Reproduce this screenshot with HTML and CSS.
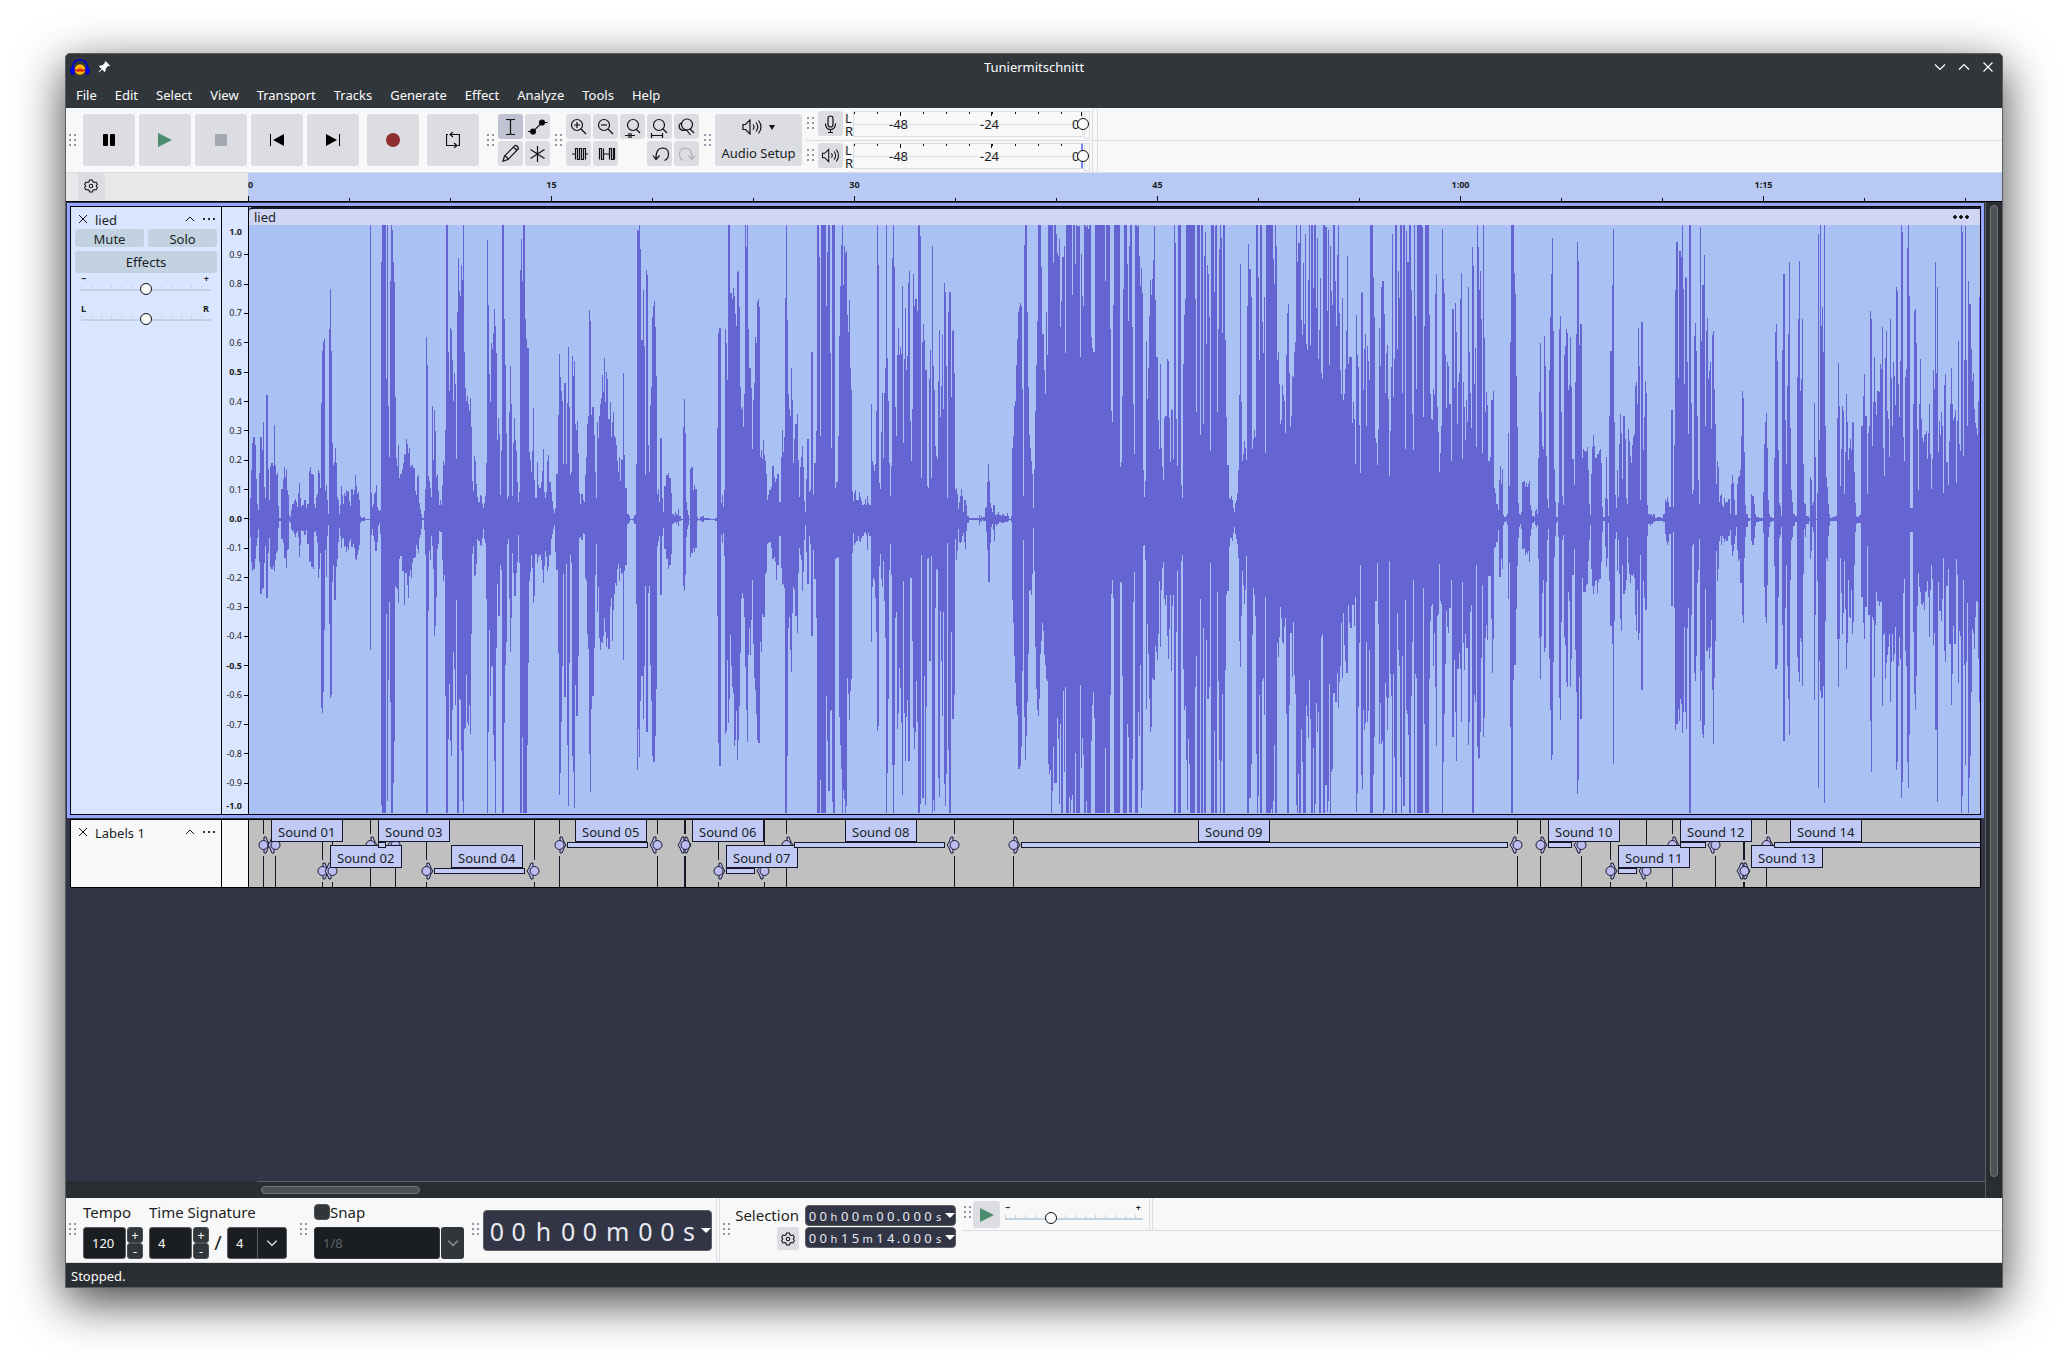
FILE: index.html
```html
<!DOCTYPE html>
<html lang="en">
<head>
<meta charset="utf-8">
<title>Tuniermitschnitt</title>
<link rel="stylesheet" href="styles.css">
</head>
<body>
<svg class="defs" aria-hidden="true">
  <symbol id="gear" viewBox="0 0 16 16"><path d="M6.3 1.2h3.4l.6 2 1.4.8 2-.5 1.6 2.8-1.4 1.7 1.4 1.7-1.6 2.8-2-.5-1.4.8-.6 2H6.3l-.6-2-1.4-.8-2 .5L.7 9.7 2.100 8 .7 6.300l1.600-2.800 2 .5 1.400-.8z"/><circle cx="8" cy="8" r="2"/></symbol>
  <symbol id="glass" viewBox="0 0 25 25"><circle cx="11" cy="11" r="5.500"/><path d="M15 15l5 5"/></symbol>
  <symbol id="speaker" viewBox="0 0 20 16"><path d="M1 5.500v5h2.500L8 15V1L3.500 5.500zM11 5.500q2 2.500 0 5M14 3.500q3.500 4.500 0 9M16.500 1.500q5 6.500 0 13"/></symbol>
  <symbol id="cross" viewBox="0 0 10 10"><path d="M1 1l8 8M9 1l-8 8"/></symbol>
  <symbol id="up" viewBox="0 0 10 10"><path d="M1 7l4-4 4 4"/></symbol>
  <symbol id="down" viewBox="0 0 10 6"><path d="M1 1l4 4 4-4"/></symbol>
</svg>
<main class="window">
  <header class="titlebar">
    <svg class="logo" viewBox="0 0 20 18"><path d="M2.500 10C2 -1 18 -1 17.500 10" fill="none" stroke="#0000d8" stroke-width="1.600"/><circle cx="10" cy="11.500" r="5.300" fill="#f7b500"/><path d="M5 12l1.500-1 1.500.5 2-1.500 2 1.500 1.500-.5 1.500 1v1.500l-1.500-.5-1.500 1-2-1-2 1-1.500-1-1.500.5z" fill="#e3260c"/><path d="M4.500 8.500v8C1 17.500 0 14 .2 12S2 8 4.500 8.500zM15.500 8.500v8c3.500 1 4.500-2.500 4.300-4.500s-1.800-4-4.300-3.500z" fill="#0000e6"/></svg>
    <svg class="pin" viewBox="0 0 12 12"><path d="M7.500 0L12 4.500l-1 .7-.8-.2L7.800 7.400 7.500 10 6.500 11 4.200 8.500 1 11.500l-.5-.5 3-3.200L1 5.500l1-1 2.600-.3L7 1.800 6.800 1z" fill="#fff"/></svg>
    <h1>Tuniermitschnitt</h1>
    <div class="window-buttons">
      <button aria-label="Minimize"><svg viewBox="0 0 10 10"><path d="M0 2.500l5 5 5-5"/></svg></button>
      <button aria-label="Maximize"><svg viewBox="0 0 10 10"><path d="M0 7.500l5-5 5 5"/></svg></button>
      <button aria-label="Close"><svg viewBox="0 0 10 10"><path d="M.5.5l9 9M9.500.5l-9 9"/></svg></button>
    </div>
  </header>
  <nav class="menubar">
    <button>File</button><button>Edit</button><button>Select</button><button>View</button><button>Transport</button><button>Tracks</button><button>Generate</button><button>Effect</button><button>Analyze</button><button>Tools</button><button>Help</button>
  </nav>

  <section class="toolbar">
    <i class="grip first"></i>
    <div class="transport">
      <button aria-label="Pause"><svg viewBox="0 0 14 14"><rect x="1" y="1" width="5" height="12" rx="1"/><rect x="8" y="1" width="5" height="12" rx="1"/></svg></button>
      <button aria-label="Play"><svg viewBox="0 0 14 14" class="green"><path d="M0 0v14l14-7z"/></svg></button>
      <button aria-label="Stop"><svg viewBox="0 0 14 14" class="grey"><path d="M1 1h12v12H1z"/></svg></button>
      <button aria-label="Skip to start"><svg viewBox="0 0 14 14"><path d="M0 1h1v12H0zM14 1v12L3 7z"/></svg></button>
      <button aria-label="Skip to end"><svg viewBox="0 0 14 14"><path d="M13 1h1v12h-1zM0 1v12l11-6z"/></svg></button>
      <button aria-label="Record" class="apart"><svg viewBox="0 0 14 14" class="red"><circle cx="7" cy="7" r="7"/></svg></button>
      <button aria-label="Loop" class="apart"><svg viewBox="0 0 14 16" class="line loop"><path d="M4 2.500h9.500v11H12M10 13.500H.5v-11H2M7 0L4 2.500 7 5M8 11l3 2.500L8 16"/></svg></button>
    </div>
    <i class="grip wide"></i>
    <div class="tools two">
      <button class="on" aria-label="Selection tool"><svg viewBox="0 0 25 25" class="line"><path d="M8 5.500h3.500l1 1 1-1H17M8 20.500h3.500l1-1 1 1H17M12.500 6v14"/></svg></button>
      <button aria-label="Envelope tool"><svg viewBox="0 0 25 25" class="line"><path d="M3 17.500h5L17 8.500h5.500"/><circle cx="8" cy="17.500" r="2.500" class="dot"/><circle cx="17" cy="8.500" r="2.500" class="dot"/></svg></button>
      <button aria-label="Draw tool"><svg viewBox="0 0 25 25" class="line"><path d="M5 20l1.500-5L17 4.500q2.500-.5 3.500 3L10 18.500zM6.500 15q3 .5 3.500 3.500M15 6.500q3 .5 3.500 3.500"/></svg></button>
      <button aria-label="Multi-tool"><svg viewBox="0 0 25 25" class="line"><path d="M12.500 5v16M5.500 8.500l14 9M19.500 8.500l-14 9"/></svg></button>
    </div>
    <i class="grip"></i>
    <div class="tools five">
      <button aria-label="Zoom in"><svg viewBox="0 0 25 25" class="line"><use href="#glass"/><path d="M8 11h6M11 8v6"/></svg></button>
      <button aria-label="Zoom out"><svg viewBox="0 0 25 25" class="line"><use href="#glass"/><path d="M8 11h6"/></svg></button>
      <button aria-label="Fit selection"><svg viewBox="0 0 25 25" class="line"><circle cx="13" cy="11" r="5.500"/><path d="M16 15l4 4M5 21.500h10M9 19v5M11 19v5"/></svg></button>
      <button aria-label="Fit project"><svg viewBox="0 0 25 25" class="line"><circle cx="12" cy="11" r="5.500"/><path d="M16 15l4 4M4.500 21.500h11M4.500 19v5M15.500 19v5"/></svg></button>
      <button aria-label="Zoom toggle"><svg viewBox="0 0 25 25" class="line"><circle cx="13" cy="10.500" r="5.500"/><path d="M16 15l4 4M8 8.500q-4 2-2.500 5.500t7 2l4 5"/></svg></button>
      <button aria-label="Trim"><svg viewBox="0 0 25 25" class="line"><path d="M6 13h4M9.500 18.500v-11h2v11h2v-11h2v11h2v-11h2V18.500M19 13h3"/></svg></button>
      <button aria-label="Silence"><svg viewBox="0 0 25 25" class="line"><path d="M6.500 18.500v-11h2v11h2v-11M10.500 13h6M16.500 18.500v-11h2v11h2v-11h1v11"/></svg></button>
      <button class="undo" aria-label="Undo"><svg viewBox="0 0 25 25" class="line"><path d="M9 18q-.5-11 7-11 5.500.5 5.500 6 0 5-4 6.500M6 14.500l3 4 3.500-4"/></svg></button>
      <button aria-label="Redo" disabled><svg viewBox="0 0 25 25" class="line"><path d="M18 18q.5-11-7-11-5.500.5-5.500 6 0 5 4 6.500M21 14.500l-3 4-3.500-4"/></svg></button>
    </div>
    <i class="grip"></i>
    <button class="audio"><span><svg class="line" viewBox="0 0 20 16"><use href="#speaker"/></svg><b class="caret"></b></span>Audio Setup</button>
    <div class="meters">
      <div class="meter-row">
        <i class="grip"></i>
        <button aria-label="Record meter"><svg viewBox="0 0 25 25" class="line"><rect x="10" y="5" width="5" height="11" rx="2.500"/><path d="M7.500 12.500q0 6 5 6t5-6M12.500 18.500v3M10 21.500h5"/></svg></button>
        <div class="lr"><span>L</span><span>R</span></div>
        <div class="meter"><div class="bars"></div><span class="m48">-48</span><span class="m24">-24</span><span class="m0">0</span><input type="range" value="100" aria-label="Recording level"></div>
      </div>
      <div class="meter-row">
        <i class="grip"></i>
        <button aria-label="Playback meter"><svg viewBox="-4 -5 28 26" class="line"><use href="#speaker" width="20" height="16"/></svg></button>
        <div class="lr"><span>L</span><span>R</span></div>
        <div class="meter play"><div class="bars"></div><span class="m48">-48</span><span class="m24">-24</span><span class="m0">0</span><input type="range" value="100" aria-label="Playback level"></div>
      </div>
    </div>
  </section>

  <section class="timeline">
    <div class="timeline-left"><button aria-label="Timeline options"><svg class="line" viewBox="0 0 16 16"><use href="#gear"/></svg></button></div>
    <div class="scale"><span>0</span><span>15</span><span>30</span><span>45</span><span>1:00</span><span>1:15</span></div>
  </section>

  <section class="workspace">
    <div class="tracks">
      <article class="track selected">
        <div class="panel">
          <div class="track-title"><button aria-label="Close track"><svg class="line" viewBox="0 0 10 10"><use href="#cross"/></svg></button><span>lied</span><button aria-label="Collapse"><svg class="line" viewBox="0 0 10 10"><use href="#up"/></svg></button><button class="more" aria-label="Track menu"></button></div>
          <div class="mute-solo"><button>Mute</button><button>Solo</button></div>
          <button class="effects">Effects</button>
          <div class="slider"><div class="ends"><span>−</span><span>+</span></div><input type="range" aria-label="Gain"></div>
          <div class="slider"><div class="ends"><span>L</span><span>R</span></div><input type="range" aria-label="Pan"></div>
        </div>
        <div class="ruler"><b>1.0</b><span>0.9</span><span>0.8</span><span>0.7</span><span>0.6</span><b>0.5</b><span>0.4</span><span>0.3</span><span>0.2</span><span>0.1</span><b>0.0</b><span>-0.1</span><span>-0.2</span><span>-0.3</span><span>-0.4</span><b>-0.5</b><span>-0.6</span><span>-0.7</span><span>-0.8</span><span>-0.9</span><b>-1.0</b></div>
        <div class="clip">
          <div class="clip-head"><span>lied</span><button class="more" aria-label="Clip menu"></button></div>
          <svg class="wave" viewBox="0 0 1731 588" preserveAspectRatio="none"><path id="wave"/></svg>
        </div>
      </article>
      <article class="track labels">
        <div class="panel"><div class="track-title"><button aria-label="Close track"><svg class="line" viewBox="0 0 10 10"><use href="#cross"/></svg></button><span>Labels 1</span><button aria-label="Collapse"><svg class="line" viewBox="0 0 10 10"><use href="#up"/></svg></button><button class="more" aria-label="Track menu"></button></div></div>
        <div class="gutter"></div>
        <svg class="label-lane" id="labels"></svg>
      </article>
    </div>
    <div class="vscroll"><i></i></div>
    <div class="hscroll"><i></i></div>
  </section>

  <section class="bottombar">
    <i class="grip first"></i>
    <div class="field">
      <label for="tempo">Tempo</label>
      <div class="controls"><input id="tempo" value="120"><div class="spin"><button>+</button><button>-</button></div></div>
    </div>
    <div class="field">
      <label for="beats">Time Signature</label>
      <div class="controls"><input id="beats" value="4"><div class="spin"><button>+</button><button>-</button></div><span class="slash">/</span><div class="combo"><select aria-label="Beat unit"><option>4</option></select><svg viewBox="0 0 10 6"><use href="#down"/></svg></div></div>
    </div>
    <i class="grip snapgrip"></i>
    <div class="field">
      <label class="snap"><input type="checkbox">Snap</label>
      <div class="controls"><div class="combo snapto"><select aria-label="Snap to" disabled><option>1/8</option></select><span class="arrow"><svg viewBox="0 0 10 6"><use href="#down"/></svg></span></div></div>
    </div>
    <i class="grip timegrip"></i>
    <div class="time big"><span>0</span><span>0</span><span class="h">h</span><span>0</span><span>0</span><span class="m">m</span><span>0</span><span>0</span><span class="s">s</span><button class="caret" aria-label="Time format"></button></div>
    <i class="split"></i>
    <i class="grip selgrip"></i>
    <div class="selection"><span>Selection</span><button aria-label="Selection options"><svg class="line" viewBox="0 0 16 16"><use href="#gear"/></svg></button></div>
    <div class="times">
      <div class="time"><span>0</span><span>0</span><span class="h">h</span><span>0</span><span>0</span><span class="m">m</span><span>0</span><span>0</span><span class="p">.</span><span>0</span><span>0</span><span>0</span><span class="s">s</span><button class="caret" aria-label="Time format"></button></div>
      <div class="time"><span>0</span><span>0</span><span class="h">h</span><span>1</span><span>5</span><span class="m">m</span><span>1</span><span>4</span><span class="p">.</span><span>0</span><span>0</span><span>0</span><span class="s">s</span><button class="caret" aria-label="Time format"></button></div>
    </div>
    <div class="speed">
      <i class="grip"></i>
      <button aria-label="Play at speed"><svg viewBox="0 0 14 14" class="green"><path d="M0 0v14l14-7z"/></svg></button>
      <div class="slider"><div class="ends"><span>−</span><span>+</span></div><input type="range" value="32" aria-label="Playback speed"></div>
      <i class="split"></i>
    </div>
  </section>
  <footer class="status">Stopped.</footer>
</main>
<script src="tracks.js"></script>
</body>
</html>
```
FILE: styles.css
```css
* { box-sizing: border-box; }
body {
  margin: 0;
  min-height: 100vh;
  padding: 53px 65px 77px;
  display: flex;
  background: #fff;
  color: #1b1e24;
  font: 13px/18px "Noto Sans", sans-serif;
}
.defs { position: absolute; width: 0; height: 0; }
button { font: inherit; color: inherit; border: 0; padding: 0; margin: 0; background: none; display: flex; align-items: center; justify-content: center; }
input, select { font: inherit; margin: 0; min-width: 0; }
svg { display: block; }
svg.line, .line { fill: none; stroke: #111; stroke-width: 1.2; }
.dot { fill: #000; }
.green { fill: #4b8b6e; }
.grey { fill: #a4a8b2; }
.red { fill: #8f2e30; }

.window {
  flex: 1;
  min-width: 0;
  display: flex;
  flex-direction: column;
  border: 1px solid #5a5e62;
  border-radius: 5px 5px 0 0;
  background: #2a2d31;
  box-shadow: 0 14px 48px rgba(0, 0, 0, .75);
}
.titlebar { height: 27px; display: flex; align-items: center; background: #31363b; color: #fcfcfc; border-radius: 4px 4px 0 0; padding: 0 9px 1px 4px; }
.titlebar h1 { flex: 1; margin: 0; font-size: 13px; font-weight: 400; text-align: center; padding-left: 23px; }
.logo { width: 20px; height: 18px; }
.pin { width: 12px; height: 12px; margin-left: 8px; }
.window-buttons { display: flex; gap: 14px; }
.window-buttons svg { width: 10px; height: 10px; fill: none; stroke: #fff; stroke-width: 1.2; overflow: visible; }
.menubar { height: 27px; display: flex; gap: 18px; padding-left: 10px; background: #31363b; color: #fcfcfc; }

.toolbar { height: 65px; display: flex; background: #f8f8f8; border-bottom: 1px solid #dcdde3; }
.grip {
  flex: none;
  align-self: center;
  width: 7px;
  height: 12px;
  margin: 0 4px 0 5px;
  background: conic-gradient(from 270deg at 2px 2px, #9496a8 90deg, transparent 0) 0 0 / 5px 5px;
}
.grip.first { margin: 0 7px 0 3px; }
.grip.wide { margin-left: 8px; }
.transport { display: flex; gap: 4px; align-self: center; margin-bottom: 1px; }
.transport button { width: 52px; height: 52px; border-radius: 3px; background: #dcdde3; }
.transport svg { width: 14px; height: 14px; }
.transport .loop { height: 16px; }
.transport .apart { margin-left: 4px; }
.tools { display: grid; gap: 2px; align-content: start; padding-top: 6px; }
.tools.two { grid-template-columns: 25px 25px; }
.tools.five { grid-template-columns: repeat(5, 25px); }
.tools button { height: 25px; border-radius: 3px; background: #dcdde3; }
.tools svg { width: 25px; height: 25px; }
.tools .on { background: #c0c2d2; }
.tools .undo { grid-column: 4; }
.tools button:disabled { opacity: 1; }
.tools button:disabled svg { stroke: #b0b2b8; }
.audio { width: 87px; height: 52px; margin-top: 6px; flex-direction: column; justify-content: space-between; padding: 3px 0 4px; border-radius: 3px; background: #dcdde3; }
.audio span { display: flex; align-items: center; gap: 7px; height: 20px; }
.audio svg { width: 20px; height: 16px; }
.caret { border: 3px solid transparent; border-top: 5px solid #111; border-bottom: 0; }
.meters { flex: 1; margin-left: 3px; }
.meter-row { height: 32px; display: flex; padding-top: 3px; }
.meter-row::after { content: ""; width: 4px; margin: -3px 0 0 3px; border: 1px solid #dcdde3; border-width: 0 1px; }
.meter-row + .meter-row { border-top: 1px solid #dcdde3; padding-top: 2px; }
.meter-row .grip { margin: 6px 4px 0 2px; align-self: flex-start; }
.meter-row button { width: 25px; height: 25px; border-radius: 3px; background: #dcdde3; }
.meter-row svg { width: 25px; height: 25px; }
.lr { width: 10px; padding: 1px 0 0 2px; display: flex; flex-direction: column; font-size: 13px; line-height: 13px; }
.meter { position: relative; width: 236px; height: 26px; }
.meter .bars {
  height: 26px;
  width: 230px;
  border: 1px solid #dcdde3;
  background:
    linear-gradient(#111, #111) 46px 0 / 1px 4px no-repeat,
    linear-gradient(#111, #111) 137px 0 / 1px 4px no-repeat,
    linear-gradient(#111, #111) 227px 0 / 1px 4px no-repeat,
    linear-gradient(90deg, transparent 22px, #111 0) 1px 0 / 23px 2px repeat-x,
    linear-gradient(#dcdde3, #dcdde3) 0 12px / 100% 1px no-repeat;
}
.meter::after { content: ""; position: absolute; left: 231px; top: 0; width: 4px; height: 26px; border: 1px solid #dcdde3; }
.meter.play .bars { border-right: 2px solid #6f86ec; }
.meter span { position: absolute; top: 4px; }
.m48 { left: 36px; }
.m24 { left: 127px; }
.m0 { left: 219px; }
.meter input { position: absolute; z-index: 1; left: 0; top: 6px; width: 236px; height: 14px; background: none; }
.meter input::-webkit-slider-thumb { width: 13px; height: 13px; }

input[type=range] { appearance: none; }
input[type=range]::-webkit-slider-thumb { appearance: none; width: 12px; height: 12px; border: 1px solid #111; border-radius: 50%; background: #fafafa; }

.timeline { height: 29px; display: flex; border-bottom: 1px solid #000; background: #b8caf3; }
.timeline-left { width: 182px; padding-left: 12px; background: #e8e8ea; }
.timeline-left button { width: 27px; height: 27px; padding: 0 1px 1px 0; border-radius: 3px; background: #dcdde3; }
.timeline-left svg { width: 14px; height: 14px; }
.scale {
  flex: 1;
  min-width: 0;
  overflow: hidden;
  display: flex;
  font-size: 9px;
  font-weight: 700;
  line-height: 24px;
  background:
    linear-gradient(90deg, transparent 302px, #111 0) 1px 100% / 303px 5px repeat-x,
    linear-gradient(90deg, transparent 100px, #111 0) 1px 100% / 101px 3px repeat-x;
}
.scale span { flex: none; width: 303px; text-align: center; }
.scale span:first-child { width: 152px; text-align: left; }

.workspace { flex: 1; display: grid; grid-template-columns: minmax(0, 1fr) 17px; grid-template-rows: 1fr 17px; }
.tracks { background: #313546; }
.vscroll { grid-row: 1 / 3; grid-column: 2; border-left: 1px solid #5a5e68; padding: 3px 4px 21px; }
.vscroll i { display: block; height: 100%; width: 8px; border: 1px solid #75787b; border-radius: 4px; background: #4e5255; }
.hscroll { grid-row: 2; margin-left: 191px; border-top: 1px solid #5a5c68; padding: 4px; }
.hscroll i { display: block; width: 159px; height: 8px; border: 1px solid #75787b; border-radius: 4px; background: #4e5255; }
.track { display: grid; grid-template-columns: 151px 27px minmax(0, 1fr); margin: 4px 4px 0; border: 1px solid #000; background: #f8f8f8; }
.track.selected { outline: 3px solid #96a5ff; background: #dae6ff; }
.track.labels { height: 69px; }
.panel { padding: 0 4px; border-right: 1px solid #000; }
.track-title { height: 22px; padding: 2px 2px 0 3px; display: flex; align-items: center; }
.track-title span { flex: 1; padding: 2px 0 0 7px; }
.track-title button:first-child svg { width: 10px; height: 10px; stroke-width: 1; }
.track-title button:nth-child(3) svg { width: 10px; height: 10px; stroke-width: 1; margin-right: 7px; }
.more { width: 13px; height: 10px; background: radial-gradient(circle at 2px 5px, #333 1px, transparent 1.500px) 0 0 / 5px 10px; }
.mute-solo { display: grid; grid-template-columns: 1fr 1fr; gap: 4px; }
.mute-solo button { height: 18px; padding-top: 2px; border-radius: 3px; background: #c3d2e0; }
.effects { width: 100%; height: 22px; margin-top: 4px; border-radius: 3px; background: #c3d2e0; }
.slider { margin: 2px 6px 9px 6px; }
.slider .ends { display: flex; justify-content: space-between; height: 7px; font-size: 9px; font-weight: 700; line-height: 8px; padding: 0 2px 0 0; }
.slider input {
  display: block;
  width: 100%;
  height: 14px;
  background:
    linear-gradient(#c3d2e0, #c3d2e0) 0 7px / 100% 2px no-repeat,
    linear-gradient(90deg, #c3d2e0 1px, transparent 0) 0 4px / 10px 3px repeat-x;
}
.ruler { display: grid; grid-template-rows: 33px repeat(19, 1fr) 16px; height: 607px; border-right: 1px solid #000; font-size: 9px; line-height: 16px; text-align: right; }
.ruler > * { display: flex; align-items: center; justify-content: flex-end; gap: 2px; }
.ruler > *::after { content: ""; width: 4px; height: 1px; background: #000; }
.ruler > b:first-child { align-items: flex-end; padding-right: 6px; }
.ruler > b:last-child { padding-right: 6px; }
.ruler > b:first-child::after, .ruler > b:last-child::after { display: none; }
.clip { display: flex; flex-direction: column; background: #aac1f3; }
.clip-head { height: 18px; display: flex; justify-content: space-between; align-items: center; border-top: 2px solid #16182a; border-radius: 4px 0 0 0; background: #cfd5f3; padding: 0 10px 0 5px; }
.clip-head .more { width: 17px; background: radial-gradient(circle at 2px 5px, #111 1.500px, transparent 2px) 0 0 / 6px 10px; }
.wave { width: 100%; height: 588px; fill: #6464d2; shape-rendering: crispEdges; }
.gutter { border-right: 1px solid #000; }
.label-lane { width: 100%; height: 67px; background: #c0c0c0; }
.label-lane text { fill: #1b1e24; }
.label-lane .box { fill: #c0caf5; stroke: #16182a; }
.label-lane .bar { fill: #c0caf5; stroke: #16182a; }
.label-lane .stem { stroke: #16182a; }
.label-lane .knob { fill: #bcbcf0; stroke: #16182a; }

.bottombar { height: 65px; display: flex; background: #f8f8f8; border-bottom: 1px solid #dcdde3; font-size: 15px; }
.bottombar > .grip { margin-bottom: 2px; }
.field { padding-top: 5px; margin-right: 6px; white-space: nowrap; }
.field label { display: block; height: 18px; margin-bottom: 6px; }
.controls { display: flex; height: 32px; color: #fcfcfc; font-size: 13px; }
.controls input { width: 43px; margin-right: 1px; padding: 0 8px; color: #fcfcfc; background: #1b1e20; border: 1px solid #5b5f63; border-radius: 3px; }
.spin { width: 16px; display: flex; flex-direction: column; }
.spin button { flex: 1; border: 1px solid #4d5156; border-radius: 3px; background: #31363b; line-height: 12px; }
.slash { width: 18px; color: #1b1e24; font-size: 20px; line-height: 32px; text-align: center; }
.combo { position: relative; width: 60px; display: flex; }
.combo select { appearance: none; width: 60px; padding: 0 8px; color: #fcfcfc; border: 1px solid #5b5f63; border-radius: 3px; background: linear-gradient(#5b5f63, #5b5f63) 29px 0 / 1px 100% no-repeat #1b1e20; }
.combo > svg { position: absolute; right: 9px; top: 12px; width: 12px; height: 8px; }
.combo svg { fill: none; stroke: #fcfcfc; stroke-width: 1; }
.combo.snapto { width: 150px; }
.snapto select { width: 126px; color: #5f6366; opacity: 1; background: #1b1e20; border-color: #33383c; }
.snapto .arrow { width: 23px; margin-left: 1px; display: flex; align-items: center; justify-content: center; border-radius: 3px; background: #31363b; }
.snapto .arrow svg { width: 12px; height: 8px; stroke: #7c8084; stroke-width: 1.500; }
.snapgrip { margin: 0 7px; }
.field label.snap { display: flex; align-items: center; }
.snap input { appearance: none; width: 16px; height: 16px; border: 1px solid #4d5156; border-radius: 4px; background: #31363b; }
.timegrip { margin: 0 4px 0 2px; }
.time { display: flex; align-items: center; width: 151px; height: 21px; padding-left: 1px; color: #e8eaf0; background: #313546; border: 1px solid #5b5f63; border-radius: 4px; font-size: 13px; }
.time span { width: 11px; text-align: center; }
.time .h, .time .m, .time .s { font-size: 11px; padding-top: 3px; }
.time .m { width: 14px; }
.time .p { width: 5px; }
.time .caret { margin-left: 1px; border-width: 5px 5px 0; border-top-color: #fff; }
.time.big { width: 229px; height: 41px; margin-top: 12px; padding-left: 2px; font-size: 25px; }
.time.big span { width: 22px; padding: 0; font-size: 25px; }
.time.big .h { width: 28px; }
.time.big .m { width: 34px; }
.split { width: 4px; margin-left: 4px; border: 1px solid #dcdde3; border-width: 0 1px; }
.selgrip { margin: 0 7px 0 3px; }
.selection { width: 62px; padding-top: 8px; display: flex; flex-direction: column; align-items: flex-end; gap: 3px; }
.selection button { width: 22px; height: 23px; border-radius: 2px; background: #dcdde3; }
.selection svg { width: 14px; height: 14px; }
.times { margin-left: 6px; padding-top: 7px; display: flex; flex-direction: column; gap: 1px; }
.speed { flex: 1; height: 33px; margin-left: 6px; display: flex; border-bottom: 1px solid #dcdde3; }
.speed .grip { margin: 0 2px 4px; }
.speed button { width: 27px; height: 27px; margin-top: 3px; border-radius: 3px; background: #dcdde3; }
.speed button svg { width: 14px; height: 14px; }
.speed .slider { width: 138px; margin: 6px 2px 0 5px; }
.status { height: 24px; padding-left: 5px; line-height: 26px; color: #fcfcfc; }
```
FILE: tracks.js
```js
const SVG = "http://www.w3.org/2000/svg";
const lane = document.getElementById("labels");

function add(name, attributes, text) {
  const node = document.createElementNS(SVG, name);
  for (const key in attributes) node.setAttribute(key, attributes[key]);
  if (text) node.textContent = text;
  lane.appendChild(node);
}

// name, start, end, row, box left edge
const labels = [
  ["Sound 01", 14, 26, 0, 22], ["Sound 02", 73, 83, 1, 81], ["Sound 03", 121, 146, 0, 129],
  ["Sound 04", 177, 285, 1, 202], ["Sound 05", 310, 408, 0, 326], ["Sound 06", 435, 436, 0, 443],
  ["Sound 07", 469, 515, 1, 477], ["Sound 08", 537, 705, 0, 596], ["Sound 09", 764, 1268, 0, 949],
  ["Sound 10", 1291, 1332, 0, 1299], ["Sound 11", 1361, 1397, 1, 1369], ["Sound 12", 1423, 1466, 0, 1431],
  ["Sound 13", 1494, 1495, 1, 1502], ["Sound 14", 1517, 1741, 0, 1541]
];

for (const [, start, end, row] of labels) {
  const y = 25 + row * 26;
  for (const x of [start, end]) add("path", { class: "stem", d: `M${x + .5} 0V${y - 11}M${x + .5} ${y + 11}V67` });
  for (const [x, dir] of [[start, 1], [end, -1]]) {
    add("path", { class: "knob", d: `M${x + dir} ${y - 8}h${2 * dir}l${2 * dir} 5l${2 * dir} 3l${-2 * dir} 3l${-2 * dir} 5h${-2 * dir}z` });
    add("circle", { class: "knob", cx: x + .5, cy: y, r: 4.5 });
  }
}
for (const [name, start, end, row, left] of labels) {
  const y = row * 26;
  if (end - start > 20) add("rect", { class: "bar", x: start + 8.5, y: y + 22.5, width: Math.max(end - start - 18, 5), height: 5 });
  add("rect", { class: "box", x: left + .5, y: y - .5, width: 71, height: 22 });
  add("text", { x: left + 7, y: y + 17 }, name);
}

const blocks = [
  { origin: -4, zoom: 2.613, peaks: `
10 806 808 13 754 852 16 683 915 18 615 937 21 599 932 26 620 908 29 706 875 32 769 855 34 784 832 37 690 915 39 599 996 44 632 984 47 561 981 50 726 918 52 754 875 55 493 1007 60 680 893 63 759 855 65 672 927 68 665 933 73 673 925 76 569 938 78 670 910 81 695 892 84 690 888 86 774 830 89 803 811 94 731 857 99 706 867 102 675 906 105 701 906 107 683 931 110 732 886 113 746 882 115 797 812 118 801 816 120 783 832 123 769 838 128 762 845 131 756 852 134 764 843 136 776 838 139 741 852 141 716 903 144 754 872 146 776 834 149 771 838 154 759 847 159 778 835 162 769 870 167 685 916 170 675 912 172 693 928 178 695 933 180 769 840 183 778 838 186 752 850 189 744 868 191 683 956 194 690 933 196 728 893 199 513 1285 201 382 1297 204 359 1244 206 352 1087 209 736 885 212 721 953 214 759 850 217 795 822 220 326 1072 222 225 1259 225 382 1252 227 615 966 230 670 923 233 662 1012 235 627 1012 238 665 927 240 751 908 243 759 865 246 794 829 248 771 850 251 723 880 253 746 858 256 769 855 259 741 878 261 748 876 264 733 890 267 739 878 270 736 886 272 762 865 275 774 857 277 731 878 282 746 870 285 733 880 287 695 908 290 723 910 293 744 898 296 738 885 298 759 872 301 799 816 304 804 811 308 802 812 313 806 809 327 63 1138 329 741 846 332 776 832 335 769 850 337 744 862 340 738 888 343 721 888 345 776 864 348 784 823 351 787 817 353 784 845 355 157 1530 358 63 1550 368 453 1047 371 63 1520 374 521 1214 376 650 1017 379 205 1270 382 63 1550 384 76 1550 387 157 1474 389 207 1368 392 498 976 394 652 980 397 673 984 400 620 1019 402 703 908 405 693 900 410 680 938 413 665 938 416 642 1024 418 645 943 421 604 943 424 617 974 426 640 1007 429 627 951 431 675 936 434 670 956 436 670 918 439 678 905 444 736 903 447 746 872 449 701 883 452 695 893 455 766 855 457 782 846 460 794 832 463 804 810 468 787 835 470 731 898 473 346 1550 475 417 1550 478 698 1039 481 711 888 483 728 910 486 751 850 489 521 876 491 658 933 494 531 1103 496 584 1077 499 700 1004 502 693 883 504 736 870 507 771 837 510 759 840 512 771 840 515 721 910 517 660 964 520 670 948 523 582 1254 525 63 1550 530 384 1363 533 483 1224 536 324 1368 538 329 1406 541 405 1290 543 508 1143 546 438 1186 549 465 1277 551 655 1012 554 283 1550 557 147 1550 559 230 1262 562 243 1265 564 164 1393 567 202 1520 570 63 1550 572 384 1338 575 475 1335 578 508 1201 580 496 1320 583 516 1328 585 534 1277 588 501 1350 590 574 1098 593 711 895 595 736 876 598 647 951 600 660 948 603 718 920 606 751 858 609 764 862 614 746 873 617 749 875 619 769 855 622 779 832 625 766 858 627 749 867 630 665 1009 632 101 1550 635 266 1345 637 440 1087 640 511 1254 643 362 1181 645 377 1179 648 336 1353 651 276 1419 653 319 1550 656 387 1133 658 607 971 661 551 1052 663 592 1052 666 746 923 669 635 936 672 63 1550 676 301 1323 679 417 1176 682 589 1118 685 756 870 687 749 857 690 536 1009 693 420 1143 695 516 1057 698 749 893 700 615 943 703 551 1001 706 607 1001 708 635 943 711 713 915 713 764 848 716 738 918 719 177 1550 722 99 1550 724 205 1358 727 63 1550 732 301 1550 734 352 1550 737 374 1378 739 374 1171 742 637 964 745 658 940 748 688 898 750 635 931 753 526 1019 756 708 1001 758 754 895 763 663 918 765 721 903 768 728 898 773 713 910 776 685 936 778 630 969 781 738 925 784 754 888 786 738 903 789 660 938 792 645 927 794 713 897 799 738 857 802 762 845 805 782 832 808 792 822 810 779 890 813 693 936 818 544 1146 821 389 1505 823 448 1449 826 483 1320 829 508 1179 831 668 946 834 463 1257 839 668 920 841 513 1378 844 372 1533 847 524 1171 849 695 898 852 688 918 855 395 1406 857 445 1447 860 407 1538 862 567 1227 865 582 1305 868 559 1305 870 640 1153 873 741 855 876 769 852 878 744 860 883 759 842 886 764 845 889 695 956 891 650 964 894 567 1098 896 546 1136 899 278 1400 901 306 1497 904 544 1287 907 524 1254 912 594 1133 915 688 948 917 754 870 920 562 1042 922 602 978 925 546 1108 927 516 1138 930 501 1118 933 443 1120 935 486 1103 938 400 1057 941 511 1092 943 435 1130 946 453 1108 948 554 1136 954 511 1029 957 599 1007 959 562 1115 962 536 1037 964 597 997 967 602 969 970 620 976 973 660 933 975 688 921 978 650 964 981 711 930 983 655 946 985 658 943 988 438 1163 990 645 938 993 728 923 998 794 820 1003 800 814 1007 806 809 1014 804 812 1017 797 819 1022 668 1022 1024 76 1442 1027 78 1338 1030 63 1409 1032 124 1267 1035 354 1204 1040 228 1313 1042 369 1179 1045 695 976 1048 177 1345 1050 190 1345 1053 620 994 1055 688 976 1058 518 1176 1061 473 1267 1063 296 1406 1066 268 1421 1069 255 1421 1071 321 1356 1074 445 1237 1076 744 875 1079 731 862 1081 764 850 1085 602 999 1090 754 850 1092 789 829 1095 723 883 1100 695 908 1105 690 933 1108 703 923 1113 741 895 1115 794 820 1120 799 814 1124 790 815 1127 795 818 1130 797 813 1132 781 824 1134 799 812 1138 806 809 1145 574 976 1147 503 989 1150 589 948 1152 764 852 1155 784 833 1158 797 822 1161 806 809 1163 680 903 1166 675 893 1171 733 880 1173 721 890 1176 731 880 1180 802 812 1184 806 809 1189 801 812 1193 799 814 1200 805 809 1215 806 809 1227 803 811 1233 577 1052 1236 336 1373 1239 324 1431 1244 766 847 1246 746 867 1249 776 842 1252 733 900 1254 326 1350 1257 362 1343 1259 455 1163 1262 63 1323 1265 63 1262 1267 235 1100 1270 235 1179 1272 250 1232 1275 223 1247 1278 243 1381 1281 288 1366 1283 319 1292 1286 182 1416 1288 180 1366 1291 271 1280 1293 473 1146 1296 529 1009 1299 524 994 1301 574 1007 1304 491 1055 1307 63 1181 1309 119 1290 1312 63 1371 1314 326 1151 1317 425 1082 1320 425 1151 1322 475 1062 1325 630 961 1328 506 1123 1330 463 1209 1333 346 1239 1335 362 1300 1338 258 1366 1340 250 1373 1343 271 1373 1345 650 1118 1348 632 1143 1350 655 1047 1354 607 1055 1356 645 1055 1359 660 946 1362 693 940 1364 759 870 1367 746 868 1369 733 865 1375 726 880 1377 673 908 1382 700 903 1385 713 915 1388 706 961 1390 693 923 1395 764 850 1400 650 930 1403 582 974 1406 637 971 1409 599 980 1411 248 1550 1413 63 1550 1416 303 1406 1419 491 1083 1422 529 1055 1424 546 1138 1427 425 1194 1429 506 1043 1432 665 978 1435 604 986 1437 567 1052 1442 541 1095 1445 658 943 1447 751 880 1450 675 898 1453 650 910 1455 622 989 1458 675 940 1461 762 860 1463 789 822 1466 706 890 1469 604 971 1473 738 850 1477 733 870 1479 384 1103 1484 746 885 1487 665 958 1492 584 1057 1495 63 1550 1500 144 1550 1503 597 1467 1505 63 1550 1518 268 1254 1521 132 1368 1524 63 1495 1529 387 1292 1531 627 1290 1534 63 1522 1536 63 1550 1542 728 908 1544 713 905 1549 597 903 1552 344 1308 1555 217 1378 1558 114 1439 1560 63 1550 1563 215 1492 1565 116 1515` },
  { origin: 596, zoom: 2.613, peaks: `
0 134 1550 3 129 1533 5 291 1209 8 334 1249 10 253 1315 13 425 1242 15 481 1211 18 736 893 21 761 842 24 741 873 26 733 867 29 759 862 34 759 850 37 738 862 39 751 865 42 761 855 44 771 850 50 769 843 52 756 840 55 771 847 57 749 885 60 766 842 63 771 850 68 516 1118 71 660 979 73 670 956 76 685 961 78 668 1007 81 534 1093 84 63 1343 86 164 1330 89 716 926 91 731 895 94 587 959 97 488 979 99 652 913 102 488 1014 105 425 1108 107 63 1550 110 400 1449 112 508 1262 115 665 936 118 749 870 120 673 948 123 147 1429 125 63 1550 128 169 1429 131 524 1057 133 597 1042 136 392 1338 139 324 1297 141 392 1184 144 372 1234 147 389 1323 149 217 1505 152 615 964 154 402 1297 157 273 1419 159 430 1308 162 395 1265 165 210 1419 167 180 1419 170 559 956 172 660 956 175 529 1115 178 187 1335 180 268 1388 183 250 1345 185 250 1216 188 281 1320 191 66 1550 193 63 1550 196 91 1528 199 703 898 201 359 1512 204 314 1512 206 354 1204 209 430 1530 211 430 1282 214 723 908 217 728 905 220 453 1166 222 379 1166 225 703 900 227 116 1550 230 420 1517 233 481 1545 235 622 1032 238 647 933 240 655 936 243 458 1462 246 329 1510 248 549 1039 251 470 1166 253 341 1305 256 529 1042 259 210 1477 261 233 1533 264 420 1452 267 754 867 269 283 1391 272 233 1550 277 498 1093 280 331 1313 282 329 1313 285 438 1252 287 733 857 290 728 910 293 744 888 295 781 832 298 764 865 301 749 867 303 731 865 306 749 850 308 789 842 311 759 865 314 759 883 316 771 838 319 799 817 323 804 809 350 797 822 353 803 812 355 799 814 358 804 809 361 802 812 366 779 812 368 776 840 371 713 885 374 668 966 376 711 966 379 766 867 382 779 827 384 789 820 387 771 835 389 771 862 392 797 819 394 797 824 397 795 819 400 789 818 402 797 815 408 799 817 411 794 817 416 799 813 423 792 815 425 799 812 429 807 809 434 799 814 436 627 1012 439 597 1070 442 521 1153 444 508 1222 447 417 1280 449 352 1302 452 283 1439 455 271 1439 457 260 1431 460 268 1383 463 478 1191 465 749 860 468 114 1308 470 63 1416 473 63 1356 476 283 1270 478 473 1148 481 594 989 484 627 986 486 660 999 489 693 946 491 779 830 494 680 938 497 534 1130 499 417 1237 502 306 1290 504 63 1305 507 63 1262 510 63 1148 512 169 1115 515 339 1070 518 339 1090 520 430 1151 523 491 1176 525 283 1211 528 392 1216 531 63 1426 533 63 1452 536 63 1442 538 63 1550 541 63 1495 544 159 1383 546 63 1474 551 86 1474 554 134 1310 557 142 1363 559 99 1528 562 321 1325 564 255 1550 567 144 1550 570 144 1242 572 116 1447 575 387 1232 578 63 1550 585 63 1510 588 63 1550 591 63 1517 593 240 1505 596 63 1550 601 162 1398 604 63 1550 606 66 1550 614 397 1227 617 137 1436 619 243 1361 622 268 1404 625 63 1550 630 68 1520 632 63 1550 635 73 1550 637 63 1550 643 346 1368 645 374 1277 648 384 1244 651 384 1310 653 63 1550 679 205 1386 682 63 1550 693 326 1252 695 534 996 698 561 961 700 266 1007 703 63 1550 719 675 966 722 663 969 724 496 1204 727 225 1550 729 63 1550 737 162 1325 740 306 1358 742 116 1548 745 63 1550 750 321 1414 753 516 1017 755 642 941 758 63 1550 763 68 1550 765 63 1295 768 142 1356 771 217 1176 774 172 1538 776 235 1492 779 683 875 781 751 873 784 711 910 787 357 1287 789 503 1072 792 425 1148 794 293 1262 797 202 1345 800 240 1333 802 200 1209 805 152 1214 808 66 1214 810 253 1128 813 397 1143 815 397 1163 818 556 1098 821 630 964 823 415 1130 826 627 986 828 675 931 831 708 916 834 551 1009 836 546 1024 839 546 999 841 402 1103 844 407 1161 847 551 1085 849 663 999 852 529 1191 855 531 1027 857 655 999 860 63 1550 862 109 1550 865 554 1093 868 673 938 870 63 1550 878 721 913 881 754 898 883 415 1186 886 291 1290 889 250 1280 891 63 1416 893 63 1543 896 63 1363 899 63 1426 902 63 1550 915 250 1232 917 536 1153 920 63 1550 928 594 1009 930 63 1550 935 567 1082 938 142 1550 941 81 1550 943 364 1113 946 164 1262 949 187 1262 951 296 1232 954 635 918 956 63 1550 964 233 1343 967 66 1550 970 63 1550 972 536 991 975 326 1216 977 124 1416 980 63 1550 982 96 1419 985 336 1249 988 63 1550 993 354 1189 996 549 999 998 670 989 1003 754 878 1006 756 855 1009 749 855 1011 759 862 1014 779 842 1016 789 827 1019 766 845 1022 759 857 1024 741 870 1027 683 905 1030 493 1115 1032 162 1181 1035 511 1052 1037 660 938 1040 642 974 1043 609 1022 1045 627 986 1048 658 900 1051 268 1550 1053 111 1550 1056 175 1512 1061 245 1426 1064 630 1100 1066 604 981 1069 582 999 1071 599 1052 1074 63 1401 1077 63 1550 1079 195 1507 1082 405 1252 1085 63 1550 1090 309 1216 1092 387 1209 1095 245 1302 1098 640 1004 1100 63 1550 1113 63 1540 1116 63 1550 1118 149 1520 1121 212 1378 1124 63 1550 1126 116 1550 1129 405 1120 1132 384 1156 1134 465 1105 1137 567 1029 1139 556 1057 1142 468 1118 1145 493 1123 1147 508 1080 1150 589 1057 1152 392 1300 1155 286 1550 1158 263 1550 1160 438 1277 1163 574 1095 1166 546 1095 1168 445 1206 1171 448 1067 1173 384 1201 1176 359 1249 1179 63 1530 1181 157 1550 1184 109 1452 1187 109 1550 1189 63 1550 1192 303 1338 1194 341 1421 1197 159 1550 1200 314 1550 1202 86 1550 1205 364 1277 1207 379 1305 1210 202 1361 1213 63 1214 1215 367 1313 1218 63 1550 1223 223 1386 1226 63 1550 1228 63 1528 1231 273 1272 1233 96 1345 1236 402 1295 1239 329 1550 1241 197 1550 1244 438 1105 1247 453 1098 1249 63 1550 1255 68 1479 1260 281 1548 1262 76 1520 1265 417 1224 1267 116 1550 1270 230 1447 1273 266 1439 1275 63 1247 1281 205 1270 1283 319 1270 1286 139 1196 1288 63 1285 1291 286 1219 1294 430 1179 1296 491 1070 1299 248 1209 1301 506 1044 1304 491 1125 1307 427 1166 1309 331 1196 1312 142 1196 1315 415 1024 1317 397 1070 1320 397 1082 1325 564 1024 1328 511 1024 1330 554 1077 1333 668 1004 1335 291 1548 1338 392 1500 1341 422 1282 1343 569 1120 1346 690 923 1348 235 1454 1351 233 1490 1354 481 1290 1356 377 1340 1359 339 1323 1362 572 1118 1364 369 1320 1367 407 1292 1369 455 1138 1372 63 1550 1380 195 1454 1382 296 1358 1385 602 1014 1388 615 1014 1390 670 918 1393 579 1072 1396 324 1376 1398 420 1272 1401 220 1376 1403 205 1368 1406 205 1550 1409 288 1543 1411 488 1222 1414 387 1257 1416 367 1340 1419 503 1259 1422 698 913 1424 584 1199 1427 422 1254 1429 86 1550 1432 498 1199 1435 402 1409 1437 63 1550 1443 377 1044 1446 180 1138 1448 248 1179` },
  { origin: 1151, zoom: 2.529, peaks: `
0 63 1459 3 63 1550 5 488 1153 8 63 1533 13 630 1012 15 78 1290 18 157 1300 20 157 1353 23 63 1550 28 228 1254 30 541 1118 33 632 961 35 63 1550 38 293 1199 40 478 1209 43 63 1550 56 68 1550 58 549 981 61 319 1325 63 63 1550 73 291 1211 76 491 1065 78 554 1027 81 556 1022 83 478 1179 86 493 1095 89 238 1232 91 187 1381 94 524 1052 96 587 1047 99 688 920 101 640 1014 104 572 1022 106 73 1550 109 200 1421 111 235 1300 114 392 1173 116 526 1039 119 410 1080 121 420 1095 124 516 1032 129 660 961 132 276 1358 137 475 1163 139 260 1295 142 334 1419 144 567 1186 147 460 1186 149 438 1146 152 250 1186 154 185 1320 157 655 966 159 460 1120 162 524 1189 164 607 1098 167 506 1133 169 561 1133 172 220 1378 175 384 1320 177 488 1042 180 577 1024 182 119 1550 185 167 1550 187 465 1252 190 374 1270 192 625 923 195 63 1383 197 119 1414 200 228 1411 202 180 1345 205 301 1158 207 640 974 210 63 1358 212 349 1310 215 536 1108 217 486 1074 220 518 1113 223 660 951 228 650 951 230 506 1060 233 506 1196 235 483 1110 238 728 880 240 741 878 243 769 865 248 784 835 250 708 953 253 673 953 256 718 908 258 680 933 260 797 822 263 802 814 268 799 812 271 794 822 273 589 1009 276 723 918 278 359 1333 281 63 1550 287 63 1214 289 185 1176 291 238 1176 293 445 1034 296 574 926 298 766 855 301 794 827 303 797 820 306 789 832 309 713 883 314 711 880 316 726 898 319 716 890 321 726 895 324 718 888 326 711 916 329 771 850 331 784 832 334 799 817 340 802 812 342 787 822 344 781 827 347 794 822 349 652 908 352 486 1108 354 362 1211 357 536 1103 359 622 994 362 630 961 364 344 1143 367 420 1133 369 647 966 372 756 860 374 779 832 377 430 1161 379 296 1290 382 187 1416 384 96 1404 387 331 1168 389 680 903 391 764 850 394 802 817 396 807 809 398 801 812 400 766 852 402 326 1259 405 293 1315 407 536 1067 410 749 860 412 771 847 415 392 1105 417 369 1125 420 326 1219 422 336 1232 425 481 991 427 468 1014 430 346 1232 432 473 1161 435 655 948 440 721 883 443 460 1138 445 339 1244 448 106 1502 450 154 1467 453 367 1206 455 314 1313 460 652 956 463 630 991 466 635 991 470 637 974 473 625 971 475 683 913 478 769 860 481 797 822 483 693 933 486 625 976 488 594 996 491 622 976 493 652 964 496 652 961 498 642 994 501 642 966 503 635 959 506 630 959 508 665 916 511 776 840 513 802 812 518 754 877 521 650 928 523 756 905 526 799 817 529 546 964 531 382 1077 536 215 1123 539 73 1426 541 562 1065 544 746 857 546 779 840 549 683 938 551 751 860 554 617 946 556 541 1060 559 589 1090 561 706 923 564 546 996 569 604 986 571 754 961 574 769 853 577 579 918 579 609 946 582 647 969 584 665 948 587 620 951 589 599 946 592 592 956 594 470 1050 597 460 1090 599 516 986 602 324 1113 604 420 1095 607 759 898 609 309 1239 615 632 964 617 549 1006 620 458 1037 622 488 1037 625 771 850 627 794 820 632 797 824 635 794 819 638 799 819 641 794 815 645 804 812 649 806 809 651 802 812 660 804 811 665 794 814 670 759 845 673 764 862 675 751 873 678 764 865 680 776 845 685 531 1027 690 776 840 693 620 1032 695 228 1340 698 106 1325 703 450 1287 706 129 1318 708 129 1262 711 144 1275 713 63 1348 716 225 1295 718 465 1080 721 195 1295 723 197 1338 726 410 1082 728 592 1032 731 63 1550 736 513 1050 738 744 875 741 733 870 744 344 1196 746 311 1216 749 382 1153 751 546 969 754 708 936 756 769 857 759 68 1318 761 357 1191 764 215 1350 766 215 1361 769 139 1328 771 572 983 774 331 1141 776 298 1141 779 453 1133 781 433 1161 784 410 1130 787 579 1062 789 341 1239 792 331 1376 794 478 1209 797 567 1115 799 718 888 802 660 964 804 675 933 807 764 862 809 749 850 812 744 873 814 771 850 817 776 855 819 754 865 822 766 857 824 764 862 830 756 850 835 794 835 837 718 872 840 695 900 842 716 888 845 759 870 847 797 850 850 797 827 852 718 885 855 700 913 858 698 908 860 683 969 863 597 969 865 483 1050 868 501 1070 870 637 905 873 771 852 876 794 827 879 804 812 885 806 809 888 744 862 890 749 873 895 769 855 897 794 825 900 802 815 907 804 811 918 738 842 921 617 978 923 561 1055 925 539 1070 928 627 974 931 759 852 933 794 827 936 801 815 940 804 811 946 652 926 948 334 1186 951 314 1186 953 407 1176 956 632 1004 958 766 855 961 774 848 963 799 827 966 379 1075 969 187 1368 974 556 1032 976 668 923 979 470 1178 981 339 1262 984 157 1353 986 577 961 989 733 860 991 764 852 994 795 823 1000 799 815 1004 448 1156 1006 301 1194 1009 154 1219 1011 483 1108 1014 453 1117 1017 301 1229 1019 668 946 1022 766 832 1025 769 852 1028 799 820 1034 804 812 1037 700 908 1040 708 888 1042 771 827 1045 764 840 1047 513 1265 1050 650 1050 1052 807 809 1055 741 964 1057 86 1487 1060 607 1166 1062 63 1242 1065 319 1259 1067 271 1259 1070 384 1229 1072 63 1525 1075 572 1065 1077 700 905 1079 726 913 1082 769 850 1084 794 823 1087 804 812 1093 802 811 1101 799 812 1104 551 1110 1107 412 1232 1109 521 1110 1112 723 906 1115 630 994 1117 521 1098 1120 534 1044 1123 744 913 1125 637 1034 1128 491 1186 1130 561 1120 1133 658 961 1135 627 1055 1138 604 1057 1141 632 986 1143 561 1098 1146 564 1067 1148 688 923 1151 766 840 1153 799 820 1155 802 816 1160 797 817 1165 688 905 1167 572 1004 1171 496 1070 1173 440 1110 1176 546 1029 1181 744 875 1184 589 1050 1186 572 1050 1189 281 1318 1191 301 1447 1194 622 1054 1196 511 1062 1199 397 1206 1201 511 1074 1203 544 991 1206 483 1014 1211 486 1027 1214 415 1017 1217 427 1017 1219 321 1280 1222 627 1100 1224 698 1095 1226 400 1211 1229 331 1171 1231 534 1151 1235 554 1130 1237 650 1098 1239 301 1270 1242 450 1168 1244 572 1098 1247 410 1166 1249 445 1148 1252 518 1080 1254 220 1442 1257 230 1421 1259 465 1178 1262 549 1105 1265 407 1161 1267 63 1512 1269 81 1472 1272 599 994 1275 660 959 1277 448 1141 1280 427 1178 1282 122 1421 1284 63 1487 1287 243 1353 1289 693 913 1291 779 840 1297 516 1092 1300 281 1249 1302 276 1290 1305 362 1204 1307 579 1027 1310 733 943 1312 516 978 1315 402 991 1317 554 1022 1320 602 1024 1322 612 1017 1325 594 1037 1328 592 991 1330 584 988 1333 655 964 1335 589 1004 1337 516 1105 1340 642 986 1343 731 923 1345 655 958 1348 430 1125 1351 478 1095 1353 157 1340 1355 438 1340 1358 220 1522 1360 637 966 1363 559 1039 1365 594 1039 1368 536 1065 1370 572 1009 1373 741 906 1375 468 1141 1378 440 1168 1380 513 1115 1382 663 976 1385 721 934 1388 609 1123 1390 516 1123 1393 425 1277 1396 516 1199 1398 556 1077 1401 549 1123 1404 531 1123 1406 716 908 1408 559 948 1411 357 1222 1413 617 1090 1416 635 1103 1419 63 1550 1421 81 1507 1424 647 961 1426 405 1176 1429 66 1429 1431 405 1168 1434 572 1019 1436 205 1550 1438 263 1462 1441 263 1406 1444 377 1244 1446 458 1085 1449 438 1095 1451 529 1136 1454 564 1055 1456 577 1014 1459 594 1017 1462 508 1161 1464 245 1270` }
];

const steps = [];
for (const { origin, zoom, peaks } of blocks) {
  const values = peaks.trim().split(/\s+/).map(Number);
  for (let i = 0; i < values.length; i += 3) {
    steps.push([
      Math.round(origin + values[i] / zoom),
      Math.round((values[i + 1] - 63) * 588 / 1487),
      Math.round((values[i + 2] - 63) * 588 / 1487)
    ]);
  }
}
let path = "";
steps.forEach(([x, top, bottom], i) => {
  const next = i + 1 < steps.length ? steps[i + 1][0] : 1731;
  if (next > x) path += `M${x} ${top}H${next}V${Math.max(bottom, top + 1)}H${x}z`;
});
document.getElementById("wave").setAttribute("d", path);
```
